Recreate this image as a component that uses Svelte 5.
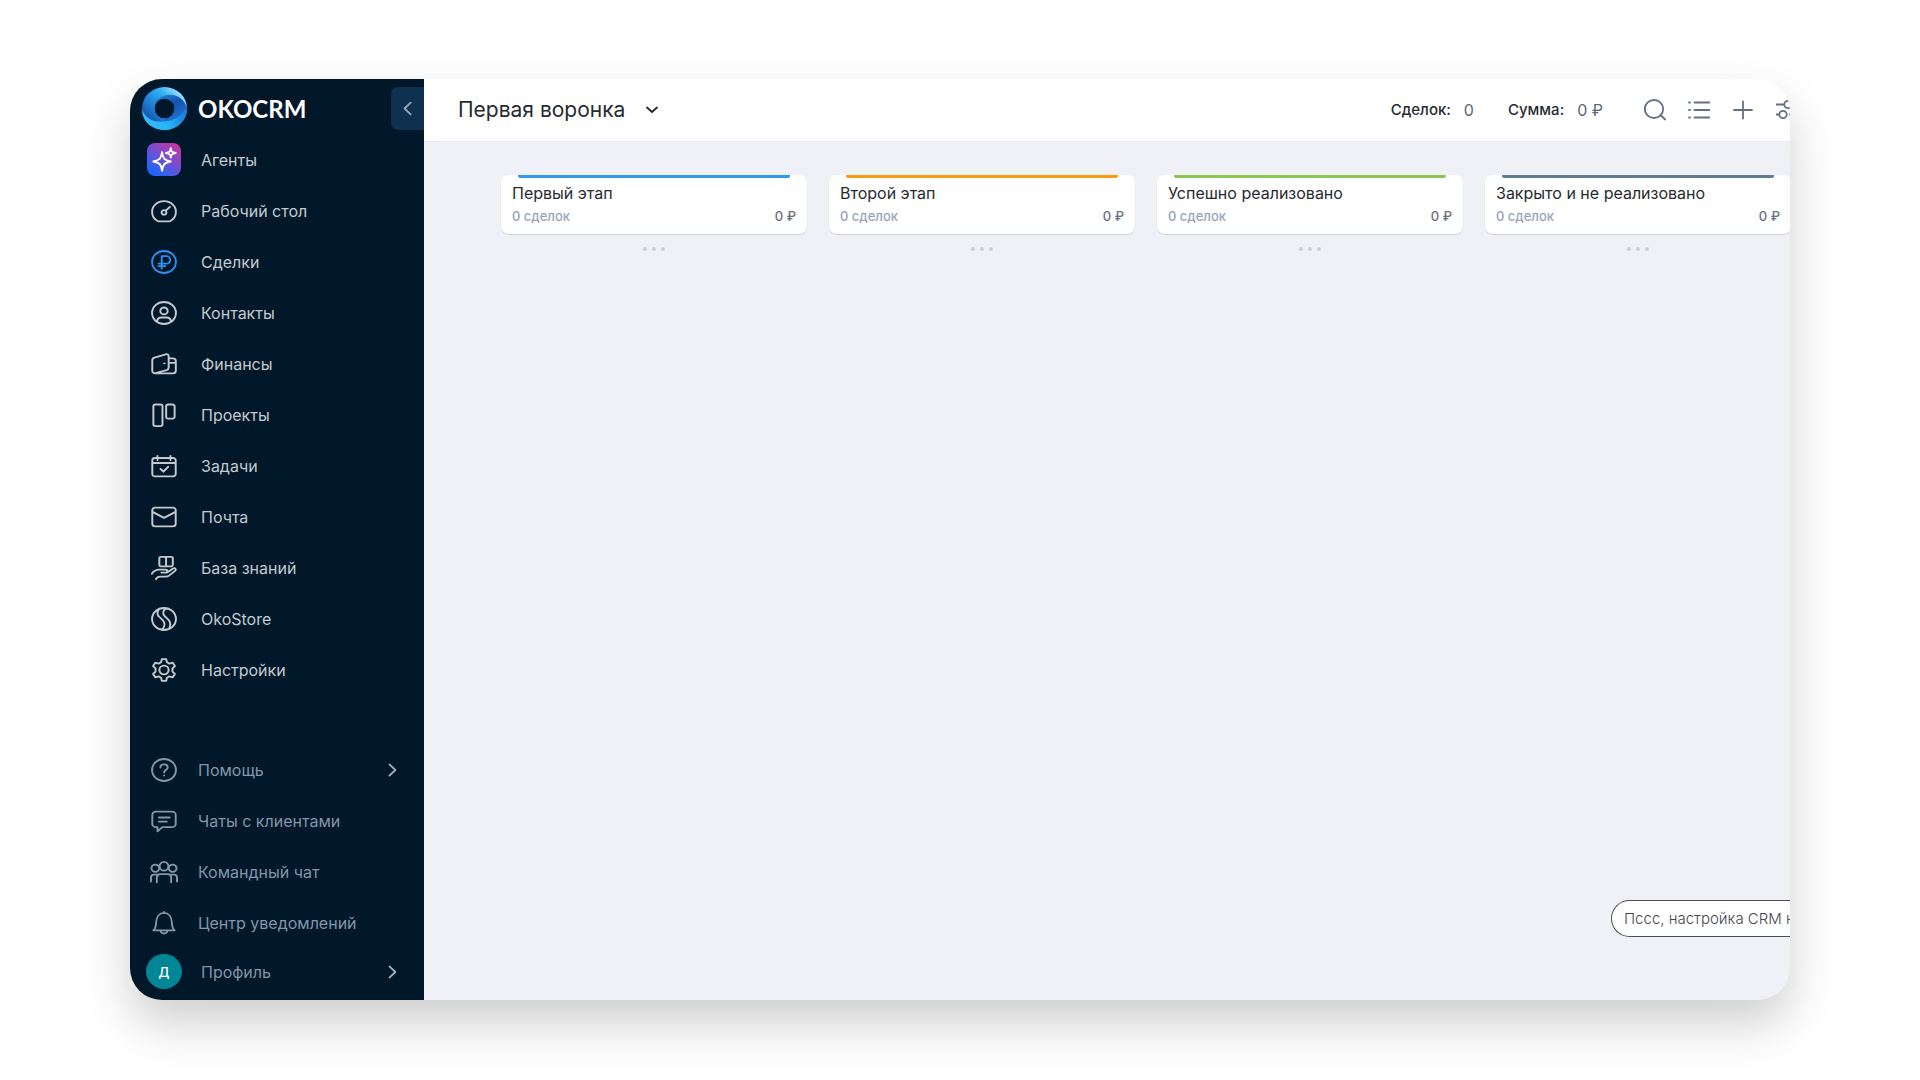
<script>
  const menu = [
    { id: 'gauge', label: 'Рабочий стол' },
    { id: 'ruble', label: 'Сделки', active: true },
    { id: 'user', label: 'Контакты' },
    { id: 'wallet', label: 'Финансы' },
    { id: 'board', label: 'Проекты' },
    { id: 'calendar', label: 'Задачи' },
    { id: 'mail', label: 'Почта' },
    { id: 'knowledge', label: 'База знаний' },
    { id: 'store', label: 'OkoStore' },
    { id: 'gear', label: 'Настройки' }
  ];

  const service = [
    { id: 'chat', label: 'Чаты с клиентами' },
    { id: 'team', label: 'Командный чат' },
    { id: 'bell', label: 'Центр уведомлений' }
  ];

  const stages = [
    { title: 'Первый этап', tone: 'blue' },
    { title: 'Второй этап', tone: 'orange' },
    { title: 'Успешно реализовано', tone: 'green' },
    { title: 'Закрыто и не реализовано', tone: 'slate' }
  ];

  const paths = {
    gauge: 'M6.6 22.3H17.4A11 10.8 0 1 0 6.6 22.3ZM9.8 13.4a2.2 2.2 0 1 0 4.4 0a2.2 2.2 0 1 0-4.4 0M13.7 11.7L17.5 7.8',
    ruble: 'M1 12a11 11 0 1 0 22 0a11 11 0 1 0-22 0M9.9 18.6V6.2h4.2a3.7 3.7 0 0 1 0 7.4H7M7 16.2h6.2',
    user: 'M1 12a11 11 0 1 0 22 0a11 11 0 1 0-22 0M8.6 9.9a3.4 3.4 0 1 0 6.8 0a3.4 3.4 0 1 0-6.8 0M5.6 20.3c.3-2.6 1.7-3.8 3.9-3.8h5c2.2 0 3.6 1.2 3.9 3.8',
    wallet: 'M1.2 8.2c0-1.4.7-2.2 2-2.6l10.3-3.3c1.6-.5 2.8.2 2.8 1.9v11.5c0 1.3-.7 2.1-1.9 2.5L4.2 21c-1.8.5-3-.2-3-2ZM4 21.4h16.2c1.7 0 2.7-1 2.7-2.7V9c0-1.7-1-2.7-2.7-2.7h-3.9M22.9 10.9h-6.6M12.2 11.3h.3',
    board: 'M4 1.5h4.8a1.8 1.8 0 0 1 1.8 1.8v18a1.8 1.8 0 0 1-1.8 1.8H4a1.8 1.8 0 0 1-1.8-1.8v-18A1.8 1.8 0 0 1 4 1.5ZM15.8 1.5H20a1.8 1.8 0 0 1 1.8 1.8v10.5a1.8 1.8 0 0 1-1.8 1.8h-4.2a1.8 1.8 0 0 1-1.8-1.8v-10.5a1.8 1.8 0 0 1 1.8-1.8Z',
    calendar: 'M3.6 4h16.8A2.4 2.4 0 0 1 22.8 6.4V20a2.4 2.4 0 0 1-2.4 2.4H3.6a2.4 2.4 0 0 1-2.4-2.4V6.4A2.4 2.4 0 0 1 3.6 4ZM1.2 9h21.6M6 1.8v4.2M18 1.8v4.2M8.8 15l2.7 2.7 4.3-4.9',
    mail: 'M3.8 2.6h16.4a2.6 2.6 0 0 1 2.6 2.6v13.6a2.6 2.6 0 0 1-2.6 2.6H3.8a2.6 2.6 0 0 1-2.6-2.6V5.2A2.6 2.6 0 0 1 3.8 2.6ZM1.8 7.1L12 12.9l10.2-5.8',
    knowledge: 'M8.9 .9h10a1.2 1.2 0 0 1 1.2 1.2v7a1.2 1.2 0 0 1-1.2 1.2H8.9a1.2 1.2 0 0 1-1.2-1.2V2.1a1.2 1.2 0 0 1 1.2-1.2ZM13.9 .9V10.3M.8 17.8c2-3.2 4-4.2 6.6-4.2h6c2.2 0 2.2 3 0 3H9.6h5.2l5.6-4c2-1.2 3.3.8 1.8 2.3l-5.6 4.7c-1 .8-1.8 1-3 1H8.4c-1.9 0-3 .8-3.8 2.6',
    store: 'M1 12a11 11 0 1 0 22 0a11 11 0 1 0-22 0M7.2 2.4c-2 2.8-1.7 5.2.6 7.6l3 3.1c2 2.3 2.2 6-.4 9.4M13.6 1.3c-3 2.9-2.9 5.7-.8 8l3.4 3.6c1.9 2.3 2.1 5 .6 8.7',
    gear: 'M10 1.2h4l.7 3.1 2.3 1.3 3.1-.9 2 3.4-2.3 2.3v3.2l2.3 2.3-2 3.4-3.1-.9-2.3 1.3-.7 3.1h-4l-.7-3.1L7 18.4l-3.1.9-2-3.4 2.3-2.3v-3.2L1.9 8.1l2-3.4 3.1.9 2.3-1.3ZM7.7 12a4.3 4.3 0 1 0 8.6 0a4.3 4.3 0 1 0-8.6 0',
    help: 'M1 12a11 11 0 1 0 22 0a11 11 0 1 0-22 0M8.7 9.6c0-4.4 6.7-4.2 6.7-.2 0 2.6-3.3 2.6-3.3 5M12.1 17.3v.3',
    chat: 'M4.5 2.6h15a3.3 3.3 0 0 1 3.3 3.3v9a3.3 3.3 0 0 1-3.3 3.3H10.5L6 22.3v-4.1H4.5a3.3 3.3 0 0 1-3.3-3.3V5.9A3.3 3.3 0 0 1 4.5 2.6ZM7.2 8.5h10M7.2 12.6h7.4',
    team: 'M8 6.3a4 4.4 0 1 0 8 0a4 4.4 0 1 0-8 0M.4 8.3a3.6 3.6 0 1 0 7.2 0a3.6 3.6 0 1 0-7.2 0M16.4 8.3a3.6 3.6 0 1 0 7.2 0a3.6 3.6 0 1 0-7.2 0M5.4 22.3v-4.4c0-2.4 1.2-3.8 3.5-3.8h6.2c2.3 0 3.5 1.4 3.5 3.8v4.4M0 21.5v-4c0-1.8.9-2.9 2.6-2.9h3M24 21.5v-4c0-1.8-.9-2.9-2.6-2.9h-3',
    bell: 'M2.2 19.3h19.6c-1.9-1.5-2.4-4-2.6-8.1C18.9 5.6 16.2 1.9 12 1.9S5.1 5.6 4.8 11.2c-.2 4.1-.7 6.6-2.6 8.1ZM8.8 19.5c.4 4 6 4 6.4 0M12 1v1'
  };
</script>

{#snippet icon(id)}
  <svg class="icon" viewBox="0 0 24 24" preserveAspectRatio="none" aria-hidden="true"><path d={paths[id]} /></svg>
{/snippet}

{#snippet chevron()}
  <svg class="chevron" viewBox="0 0 10 16" aria-hidden="true"><path d="M1.5 1.5L8.3 8L1.5 14.5" /></svg>
{/snippet}

<div class="stage">
  <div class="window">
    <aside class="sidebar">
      <div class="brand">
        <a class="logo" href="#home">
          <svg viewBox="0 0 46 44" preserveAspectRatio="none" aria-hidden="true">
            <defs>
              <linearGradient id="swirlTop" x1="0.9" y1="0.1" x2="0.15" y2="0.8">
                <stop offset="0" stop-color="#b4e6fd" />
                <stop offset="0.35" stop-color="#2fb2f4" />
                <stop offset="0.7" stop-color="#1f7fd6" />
                <stop offset="1" stop-color="#1450a8" />
              </linearGradient>
              <linearGradient id="swirlRight" x1="0.2" y1="0" x2="0.7" y2="1">
                <stop offset="0" stop-color="#2385dc" />
                <stop offset="0.35" stop-color="#1452ae" />
                <stop offset="0.7" stop-color="#1c6dcb" />
                <stop offset="1" stop-color="#2aa9f2" />
              </linearGradient>
              <linearGradient id="swirlLow" x1="0" y1="0.3" x2="1" y2="0.2">
                <stop offset="0" stop-color="#36bdf8" />
                <stop offset="0.55" stop-color="#27b2f8" />
                <stop offset="1" stop-color="#1d74cf" />
              </linearGradient>
            </defs>
            <ellipse cx="23" cy="22" rx="23" ry="22" fill="url(#swirlTop)" />
            <path d="M13 16C17 10 23 8 29 8C37 8 43 13 46 21C46 32 38 42 24 43L23 32Z" fill="url(#swirlRight)" />
            <path d="M0 23C3 31 10 35.5 19 35.5C30 35.5 40 32 46 20C47 34 36 44 23 44C10 44 0 35 0 23Z" fill="url(#swirlLow)" />
            <circle cx="23" cy="22" r="10" fill="#00182a" />
          </svg>
          <span>OKOCRM</span>
        </a>
        <button class="collapse" aria-label="Свернуть меню">
          <svg viewBox="0 0 10 16" aria-hidden="true"><path d="M8.5 1.5L1.7 8L8.5 14.5" /></svg>
        </button>
      </div>

      <nav class="menu">
        <a class="item" href="#agents">
          <span class="cell">
            <span class="tile">
              <svg viewBox="0 0 34 34" aria-hidden="true">
                <path d="M15 9.5C15.7 15.7 17.3 17.8 24 19C17.3 20.2 15.7 22.3 15 28.5C14.3 22.3 12.7 20.2 6 19C12.7 17.8 14.3 15.7 15 9.5Z" />
                <path d="M24 5.5C24.4 8.9 25.2 9.6 29 10.3C25.2 11 24.4 11.8 24 15C23.6 11.8 22.8 11 19 10.3C22.8 9.6 23.6 8.9 24 5.5Z" />
              </svg>
            </span>
          </span>
          <span>Агенты</span>
        </a>
        {#each menu as entry}
          <a class="item" class:active={entry.active} href="#{entry.id}">
            <span class="cell">{@render icon(entry.id)}</span>
            <span>{entry.label}</span>
          </a>
        {/each}
      </nav>

      <nav class="menu service">
        <button class="item">
          <span class="cell">{@render icon('help')}</span>
          <span>Помощь</span>
          {@render chevron()}
        </button>
        {#each service as entry}
          <a class="item" href="#{entry.id}">
            <span class="cell">{@render icon(entry.id)}</span>
            <span>{entry.label}</span>
          </a>
        {/each}
        <button class="item profile">
          <span class="cell"><span class="avatar">Д</span></span>
          <span>Профиль</span>
          {@render chevron()}
        </button>
      </nav>
    </aside>

    <main>
      <header>
        <button class="funnel">
          <span>Первая воронка</span>
          <svg viewBox="0 0 12 8" aria-hidden="true"><path d="M1 1.5L6 6L11 1.5" /></svg>
        </button>
        <dl class="totals">
          <div><dt>Сделок:</dt><dd>0</dd></div>
          <div><dt>Сумма:</dt><dd>0 ₽</dd></div>
        </dl>
        <div class="tools">
          <button aria-label="Поиск">
            <svg viewBox="0 0 22 22" aria-hidden="true"><ellipse cx="10" cy="10" rx="9.2" ry="9" /><path d="M16.5 16L21.2 20.5" /></svg>
          </button>
          <button aria-label="Список">
            <svg viewBox="0 0 22 22" aria-hidden="true"><path d="M6.5 3.5H21.5M6.5 11H21.5M6.5 18.5H21.5M1 3.5h1M1 11h1M1 18.5h1" /></svg>
          </button>
          <button aria-label="Добавить">
            <svg viewBox="0 0 22 22" aria-hidden="true"><path d="M2 11H20M11 2.5V19.5" /></svg>
          </button>
          <button class="cut" aria-label="Фильтры">
            <svg viewBox="0 0 22 22" aria-hidden="true"><path d="M0 5.5H8M16 5.5H22M0 15.5H3M14 15.5H22" /><circle cx="12" cy="5.5" r="3.7" /><circle cx="7" cy="15.5" r="3.7" /></svg>
          </button>
        </div>
      </header>

      <div class="board">
        {#each stages as stage}
          <section class="column">
            <div class="card {stage.tone}">
              <h2>{stage.title}</h2>
              <p><span>0 сделок</span><b>0 ₽</b></p>
            </div>
            <button class="more" aria-label="Действия этапа"><i></i><i></i><i></i></button>
          </section>
        {/each}
      </div>

      <button class="hint">Пссс, настройка CRM н</button>
    </main>
  </div>
</div>

<style>
  :global(body) {
    margin: 0;
    background: #fff;
  }

  button {
    margin: 0;
    padding: 0;
    border: 0;
    background: none;
    font: inherit;
    color: inherit;
    cursor: pointer;
  }

  a {
    color: inherit;
    text-decoration: none;
  }

  svg {
    display: block;
    flex: none;
    fill: none;
    stroke: currentColor;
    stroke-linecap: round;
    stroke-linejoin: round;
  }

  .stage {
    box-sizing: border-box;
    display: flex;
    min-height: 100vh;
    padding: 79px 130px 80px;
    font-family: Inter, "Noto Sans", sans-serif;
    font-size: 16px;
    line-height: 20px;
  }

  .window {
    flex: 1;
    min-width: 0;
    display: flex;
    overflow: hidden;
    border-radius: 32px;
    background: #f0f1f6;
    box-shadow: 0 24px 48px rgba(0, 0, 0, 0.19);
  }

  .sidebar {
    flex: 0 0 294px;
    display: flex;
    flex-direction: column;
    background: #00182a;
    color: #c5cacf;
  }

  .brand {
    display: flex;
    align-items: center;
    justify-content: space-between;
    padding-top: 8px;
    padding-left: 12px;
  }

  .logo {
    display: flex;
    align-items: center;
    gap: 11px;
    font-family: Lato, sans-serif;
    font-size: 24px;
    font-weight: 700;
    color: #fff;
  }

  .logo svg {
    width: 45px;
    height: 43px;
    stroke: none;
  }

  .collapse {
    display: grid;
    place-items: center;
    width: 33px;
    height: 43px;
    border-radius: 7px 0 0 7px;
    background: #0f3150;
    color: #9aa9b8;
  }

  .collapse svg {
    width: 9px;
    height: 15px;
    stroke-width: 2;
  }

  .menu {
    display: flex;
    flex-direction: column;
    padding-top: 4px;
  }

  .item {
    display: flex;
    align-items: center;
    gap: 18px;
    height: 51px;
    padding: 0 27px 0 15px;
    text-align: left;
    white-space: nowrap;
  }

  .cell {
    display: grid;
    place-items: center;
    width: 38px;
  }

  .icon {
    width: 26px;
    height: 24px;
    stroke-width: 1.8;
    overflow: visible;
  }

  .active .icon {
    color: #2e8ff0;
  }

  .tile {
    display: block;
    border-radius: 8px;
    background: linear-gradient(35deg, #1767fb 10%, #6a51d8 50%, #c935a0 92%);
    color: #fff;
  }

  .tile svg {
    width: 34px;
    height: 33px;
    stroke-width: 2;
  }

  .service {
    margin-top: auto;
    padding-bottom: 5px;
    color: #8496a9;
  }

  .service .item {
    gap: 15px;
  }

  .service .profile {
    gap: 18px;
    height: 47px;
  }

  .chevron {
    width: 9px;
    height: 14px;
    margin-left: auto;
    stroke-width: 2;
    color: #a3b0bd;
  }

  .avatar {
    display: grid;
    place-items: center;
    width: 36px;
    height: 35px;
    border-radius: 50%;
    background: #008697;
    color: #fff;
    font-size: 13px;
    font-weight: 500;
  }

  main {
    position: relative;
    flex: 1;
    min-width: 0;
    display: flex;
    flex-direction: column;
    overflow: hidden;
  }

  header {
    display: flex;
    align-items: center;
    height: 62px;
    padding-left: 34px;
    border-bottom: 1px solid #e6e8ec;
    background: #fff;
    color: #262b31;
  }

  .funnel {
    display: flex;
    align-items: center;
    gap: 21px;
    font-size: 21px;
    line-height: 28px;
  }

  .funnel svg {
    width: 12px;
    height: 8px;
    stroke-width: 1.8;
  }

  .totals {
    display: flex;
    gap: 34px;
    margin: 0 41px 0 auto;
    font-size: 15px;
    font-weight: 500;
    white-space: nowrap;
  }

  .totals div {
    display: flex;
    gap: 13px;
  }

  dd {
    margin: 0;
    font-size: 16px;
    font-weight: 400;
    color: #5d6673;
  }

  .tools {
    display: flex;
    gap: 22px;
    color: #63717f;
  }

  .tools svg {
    width: 22px;
    height: 22px;
    stroke-width: 1.8;
  }

  .tools .cut {
    width: 14px;
  }

  .board {
    display: flex;
    gap: 22px;
    padding: 33px 0 0 77px;
    overflow: hidden;
  }

  .column {
    flex: 0 0 306px;
    display: flex;
    flex-direction: column;
    align-items: center;
    gap: 8px;
  }

  .card {
    box-sizing: border-box;
    position: relative;
    width: 100%;
    padding: 8px 11px 8px;
    border-radius: 8px;
    background: #fff;
    box-shadow: 0 1px 1px rgba(30, 40, 60, 0.16);
  }

  .card::before {
    content: "";
    position: absolute;
    top: 0;
    left: 17px;
    right: 17px;
    height: 3px;
    border-radius: 0 0 2px 2px;
    background: var(--tone);
  }

  .blue { --tone: #2f9af0; }
  .orange { --tone: #fb9b14; }
  .green { --tone: #8bc751; }
  .slate { --tone: #607f8e; }

  h2 {
    margin: 0;
    font-size: 16px;
    font-weight: 400;
    line-height: 20px;
    color: #262b31;
    white-space: nowrap;
  }

  .card p {
    display: flex;
    justify-content: space-between;
    margin: 3px 0 0;
    font-size: 13px;
    font-weight: 500;
    color: #97a5ba;
  }

  .card b {
    font-weight: 500;
    color: #66717c;
  }

  .more {
    display: flex;
    align-items: center;
    gap: 5px;
    height: 13px;
  }

  .more i {
    width: 4px;
    height: 4px;
    border-radius: 50%;
    background: #c9ced6;
  }

  .hint {
    position: absolute;
    right: 0;
    bottom: 63px;
    box-sizing: border-box;
    width: 179px;
    height: 37px;
    padding-left: 12px;
    border: 1px solid #4d4f52;
    border-right: 0;
    border-radius: 19px 0 0 19px;
    background: #fff;
    color: #45484d;
    font-size: 15px;
    font-weight: 300;
    text-align: left;
    white-space: nowrap;
    overflow: hidden;
  }
</style>
